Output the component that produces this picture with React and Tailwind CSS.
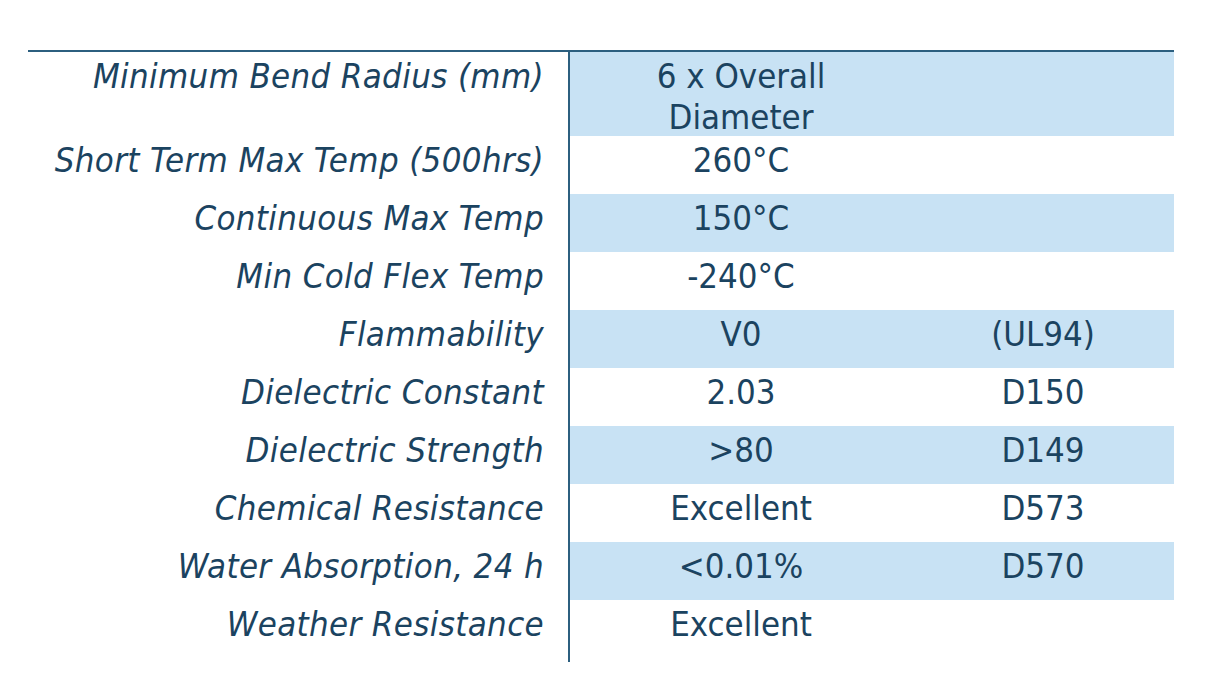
const rows = [
  { label: "Minimum Bend Radius (mm)", value: ["6 x Overall", "Diameter"], test: "", h: "h-[84px]", blue: true },
  { label: "Short Term Max Temp (500hrs)", value: ["260°C"], test: "", h: "h-[58px]" },
  { label: "Continuous Max Temp", value: ["150°C"], test: "", h: "h-[58px]", blue: true },
  { label: "Min Cold Flex Temp", value: ["-240°C"], test: "", h: "h-[58px]" },
  { label: "Flammability", value: ["V0"], test: "(UL94)", h: "h-[58px]", blue: true },
  { label: "Dielectric Constant", value: ["2.03"], test: "D150", h: "h-[58px]" },
  { label: "Dielectric Strength", value: [">80"], test: "D149", h: "h-[58px]", blue: true },
  { label: "Chemical Resistance", value: ["Excellent"], test: "D573", h: "h-[58px]" },
  { label: "Water Absorption, 24 h", value: ["<0.01%"], test: "D570", h: "h-[58px]", blue: true },
  { label: "Weather Resistance", value: ["Excellent"], test: "", h: "h-[62px]" },
];

export default function App() {
  return (
    <div className="min-h-[692px] w-[1218px] bg-white pt-[50px] pl-[28px]">
      <div
        className="w-[1146px] border-t-2 border-[#2c5f7f] text-[#1b4360] text-[34.5px] leading-[41px]"
        style={{ fontFamily: '"DejaVu Sans Condensed", "DejaVu Sans", sans-serif' }}
      >
        {rows.map((r) => (
          <div key={r.label} className={`grid grid-cols-[540px_344px_262px] ${r.h}`}>
            <div className="pt-[4px] pr-[24px] text-right italic tracking-[0.35px]">{r.label}</div>
            <div
              className={`border-l-2 border-[#2c5f7f] pt-[4px] text-center ${
                r.blue ? "bg-[#c8e2f4]" : "bg-white"
              }`}
            >
              {r.value.map((v) => (
                <div key={v}>{v}</div>
              ))}
            </div>
            <div className={`pt-[4px] text-center ${r.blue ? "bg-[#c8e2f4]" : "bg-white"}`}>
              {r.test}
            </div>
          </div>
        ))}
      </div>
    </div>
  );
}
